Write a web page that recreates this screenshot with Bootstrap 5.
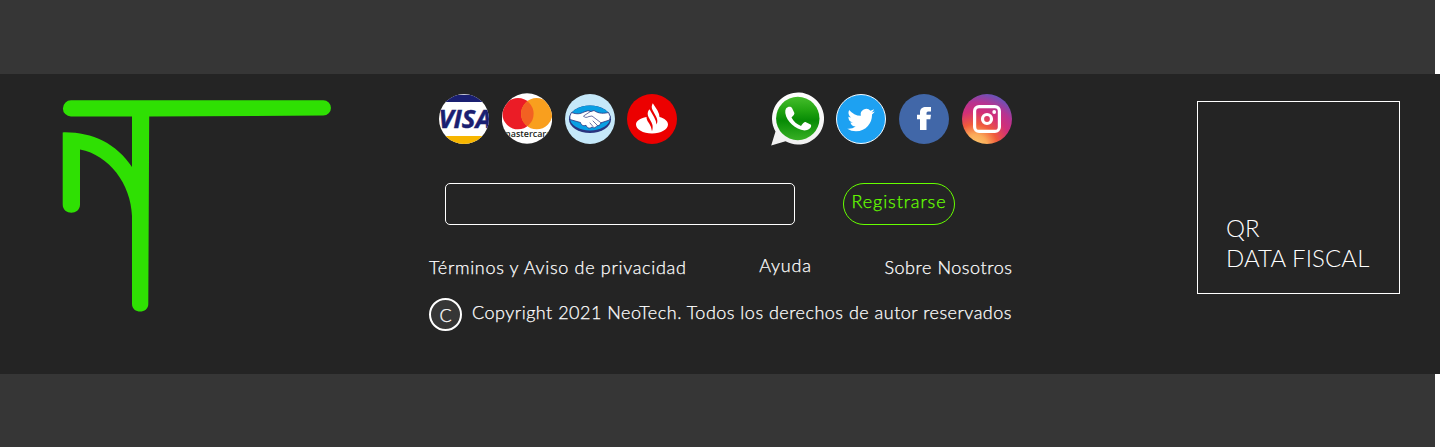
<!DOCTYPE html>
<html lang="es">
<head>
<meta charset="utf-8">
<meta name="viewport" content="width=device-width, initial-scale=1">
<title>NeoTech</title>
<link href="https://cdn.jsdelivr.net/npm/bootstrap@5.3.0/dist/css/bootstrap.min.css" rel="stylesheet">
<style>
  body { background: #fff; font-family: Lato, "Open Sans", sans-serif; font-size: 18px; line-height: 22px; font-weight: 300; overflow: hidden; }
  .band { width: 1435px; background: #363636; }
  .band-top { height: 74px; }
  .band-bottom { height: 73px; }
  .site-footer { height: 300px; background: #242424; color: #fff; padding: 0 40px 0 62px; }
  .brand { margin-top: 25px; }
  .middle { width: 583px; margin-left: 98px; -webkit-text-stroke-width: .25px; }
  .icon-row { height: 54px; margin-top: 18px; padding-left: 10px; -webkit-text-stroke-width: 0; }
  .pay-icons { gap: 13px; }
  .pay-icons svg:last-child, .social-icons svg:nth-child(2) { margin-left: -1px; }
  .social-icons { gap: 13px; }
  .icon-row svg { display: block; flex: none; }
  .signup { margin: 37px 0 0 16px; }
  .mail-box { width: 350px; height: 42px; background: transparent !important; border: 1px solid #fff; border-radius: 5px; }
  .btn-signup { width: 112px; height: 42px; margin-left: 48px; padding: 0 0 6px; border: 1px solid #66ff00; border-radius: 21px; color: #66ff00; font-size: 18px; line-height: 22px; font-weight: 300; letter-spacing: .9px; -webkit-text-stroke-width: .25px; }
  .foot-links { margin-top: 31px; height: 31px; }
  .foot-links a { color: #fff; text-decoration: none; white-space: nowrap; letter-spacing: .68px; }
  .foot-links .link-help { margin-top: -2px; letter-spacing: .8px; }
  .foot-links .link-about { letter-spacing: .56px; margin-right: -.5px; }
  .copy-mark { width: 33px; height: 33px; border: 2px solid #fff; background: #363636; padding-top: 4px; }
  .copy-row { margin-top: 11px; gap: 10px; white-space: nowrap; }
  .legal { padding-top: 3px; letter-spacing: .495px; }
  .qr-box { width: 203px; height: 193px; margin-top: 27px; border: 1px solid #fff; padding: 0 0 20px 28px; font-size: 24px; line-height: 30px; font-weight: 300; letter-spacing: .1px; }
</style>
</head>
<body>
<div class="band band-top"></div>
<footer class="site-footer d-flex align-items-start">
  <svg class="brand flex-shrink-0" width="269" height="213" viewBox="62 99 269 213" aria-label="NeoTech">
    <path fill="#2fe003" d="M71 100.300H323.300A7.600 7.600 0 0 1 323.300 115.600L149.200 116.600L148.300 304C148.300 314 132 314 132 304V216C131 184 109 155 80 149.500V204.500C80 215.500 62.700 215.500 62.700 204.500V132.400C91 131.700 116 143 132 167V116.500H71A8.100 8.100 0 0 1 71 100.300Z"/>
  </svg>

  <div class="middle flex-shrink-0">
    <div class="icon-row d-flex justify-content-between align-items-center">
      <div class="pay-icons d-flex">
        <svg width="50" height="52" viewBox="439 93 50 52">
          <defs><clipPath id="visa"><circle cx="464" cy="119" r="25"/></clipPath></defs>
          <g clip-path="url(#visa)"><path fill="#fff" d="M439 93h50v52h-50z"/><path fill="#1a1f71" d="M439 94.800h50v7.200h-50z"/><path fill="#f7b600" d="M439 136h50v8h-50z"/>
          <text x="438.500" y="128" font-family="Open Sans" font-weight="700" font-style="italic" font-size="24.500" textLength="53" lengthAdjust="spacingAndGlyphs" fill="#1a1f71" stroke="#1a1f71" stroke-width=".5">VISA</text></g>
        </svg>
        <svg width="50" height="52" viewBox="502 93 50 52">
          <defs><clipPath id="master"><circle cx="527" cy="118.500" r="25.200"/></clipPath><clipPath id="masterleft"><circle cx="518" cy="113.700" r="15.600"/></clipPath></defs>
          <g clip-path="url(#master)"><path fill="#fff" d="M502 93h50v52h-50z"/><circle cx="518" cy="113.700" r="15.600" fill="#eb1c26"/><circle cx="536.700" cy="113.700" r="15.600" fill="#f99f1e"/><circle cx="536.700" cy="113.700" r="15.600" fill="#f26122" clip-path="url(#masterleft)"/>
          <text x="502.300" y="137" font-family="Open Sans" font-weight="600" font-size="8.700" textLength="49.400" lengthAdjust="spacingAndGlyphs" fill="#231f20">mastercard</text></g>
        </svg>
        <svg width="50" height="52" viewBox="565 93 50 52">
          <circle cx="590" cy="119" r="25" fill="#c5e8f9"/>
          <ellipse cx="590" cy="119.300" rx="21" ry="13.800" fill="#29347f"/><ellipse cx="590" cy="118" rx="20.200" ry="12.400" fill="#099fe3"/>
          <path fill="#fff" stroke="#29347f" stroke-width=".8" stroke-linejoin="round" d="M571.500 112.500C577 114.500 580 114 584 112L588 110.700L591 111.500L594 110.500C599 114 604 113.500 608.500 112.500Q611.500 117 609.500 120L601 122.800C600 125.300 598.500 126 597 125.700C595 128.400 593.500 128 592 127C589 129.500 587 127.500 586 125.300C583 126.500 581 124.700 580.500 122.500L570 119.500Q569 116 571.500 112.500Z"/>
          <path fill="none" stroke="#29347f" stroke-width=".7" stroke-linecap="round" d="M590.500 111.500L583.500 116Q585 118.500 589 116.500L592 116L601 122.800M593 121l4 4M590 123l3 3.500"/>
        </svg>
        <svg width="50" height="52" viewBox="627 93 50 52">
          <circle cx="652" cy="119" r="25" fill="#ec0000"/>
          <path fill="#fff" d="M646.500 117C640 118.300 636 121.200 636 124.500C636 129.500 643 133.400 652 133.400S668 129.500 668 124.500C668 121 664.500 118.200 659.500 117Q659.400 114 657.500 110.500L652.800 103.200Q650.800 106.500 652.500 110L656.300 117Q658.300 121 656.500 124.500Q656 120.500 654 117L650.500 111Q649.500 108.500 648.700 110.300Q646.800 113.500 648.500 117L651.500 122.500Q653.500 126.500 652 131.200Q651.500 127 649.500 124L647.500 121Q646.500 119.500 646.500 117Z"/>
        </svg>
      </div>
      <div class="social-icons d-flex align-items-center">
        <svg width="53" height="54" viewBox="771 92 53 54">
          <defs><linearGradient id="wa" x1="0" y1="0" x2="0" y2="1"><stop offset="0" stop-color="#45bd2c"/><stop offset=".3" stop-color="#23a512"/><stop offset=".55" stop-color="#078b05"/><stop offset="1" stop-color="#38b025"/></linearGradient><linearGradient id="wb" x1="0" y1="0" x2="0" y2="1"><stop offset="0" stop-color="#fff"/><stop offset="1" stop-color="#f0f0f0"/></linearGradient></defs>
          <path fill="url(#wb)" d="M771.200 145.500L775.500 131.500A26 26 0 1 1 785.500 141.300Z"/><circle cx="797.800" cy="118.500" r="21.700" fill="url(#wa)"/>
          <path fill="#fff" d="M786 108.500C788 106.300 791 106.500 792 108L794.400 113Q794.700 114.500 791.500 117.500C793.500 121.500 797 124.500 801 126Q804 121.500 805.500 122L811 124.800C812 128 808 130.500 804.500 130.500C795.500 129.500 786.500 121.500 785.300 113Q785 110 786 108.500Z"/>
        </svg>
        <svg width="50" height="52" viewBox="836 93 50 52">
          <circle cx="861" cy="119" r="24.500" fill="#1da1f2" stroke="#f4faff"/>
          <path fill="#fff" transform="translate(847.300 105.500) scale(1.720)" d="M5.026 15c6.038 0 9.341-5.003 9.341-9.334 0-.14 0-.282-.006-.422A6.700 6.700 0 0 0 16 3.542a6.700 6.700 0 0 1-1.889.518 3.300 3.300 0 0 0 1.447-1.817 6.500 6.500 0 0 1-2.087.793A3.286 3.286 0 0 0 7.875 6.030a9.320 9.320 0 0 1-6.767-3.429 3.290 3.290 0 0 0 1.018 4.382A3.300 3.300 0 0 1 .64 6.575v.045a3.290 3.290 0 0 0 2.632 3.218 3.200 3.200 0 0 1-.865.115 3 3 0 0 1-.614-.057 3.280 3.280 0 0 0 3.067 2.277A6.600 6.600 0 0 1 .780 13.580a6 6 0 0 1-.78-.045A9.340 9.340 0 0 0 5.026 15"/>
        </svg>
        <svg width="50" height="52" viewBox="899 93 50 52">
          <circle cx="924" cy="119" r="25" fill="#4167a8"/>
          <path fill="#fff" d="M920 130V119.200H917V114.700H920V112.500C920 108.500 922.500 107 926 107H931V111.400H928Q926.500 111.400 926.500 113V114.700H931L930.300 119.200H926.500V130Z"/>
        </svg>
        <svg width="50" height="52" viewBox="962 93 50 52">
          <defs><radialGradient id="ig" gradientUnits="userSpaceOnUse" cx="975" cy="147" r="57"><stop offset="0" stop-color="#fdce71"/><stop offset=".22" stop-color="#fbaa59"/><stop offset=".4" stop-color="#f05b3c"/><stop offset=".62" stop-color="#d22f78"/><stop offset=".78" stop-color="#b83390"/><stop offset="1" stop-color="#5c58c0"/></radialGradient></defs>
          <circle cx="987" cy="119" r="25" fill="url(#ig)"/>
          <rect x="974.600" y="106.600" width="24.800" height="24.800" rx="4.500" fill="none" stroke="#fff" stroke-width="3.200"/><circle cx="987" cy="119" r="4.500" fill="none" stroke="#fff" stroke-width="3.200"/><circle cx="994.200" cy="112" r="1.900" fill="#fff"/>
        </svg>
      </div>
    </div>

    <form class="signup d-flex">
      <input type="email" class="mail-box form-control" aria-label="Email">
      <button type="button" class="btn btn-signup">Registrarse</button>
    </form>

    <nav class="foot-links d-flex justify-content-between align-items-start">
      <a href="#">Términos y Aviso de privacidad</a>
      <a href="#" class="link-help">Ayuda</a>
      <a href="#" class="link-about">Sobre Nosotros</a>
    </nav>

    <div class="copy-row d-flex">
      <span class="copy-mark rounded-circle d-flex justify-content-center flex-shrink-0">C</span>
      <span class="legal">Copyright 2021 NeoTech. Todos los derechos de autor reservados</span>
    </div>
  </div>

  <div class="qr-box ms-auto d-flex flex-column justify-content-end flex-shrink-0">
    <span>QR</span>
    <span>DATA FISCAL</span>
  </div>
</footer>
<div class="band band-bottom"></div>
<script src="https://cdn.jsdelivr.net/npm/bootstrap@5.3.0/dist/js/bootstrap.bundle.min.js"></script>
</body>
</html>
